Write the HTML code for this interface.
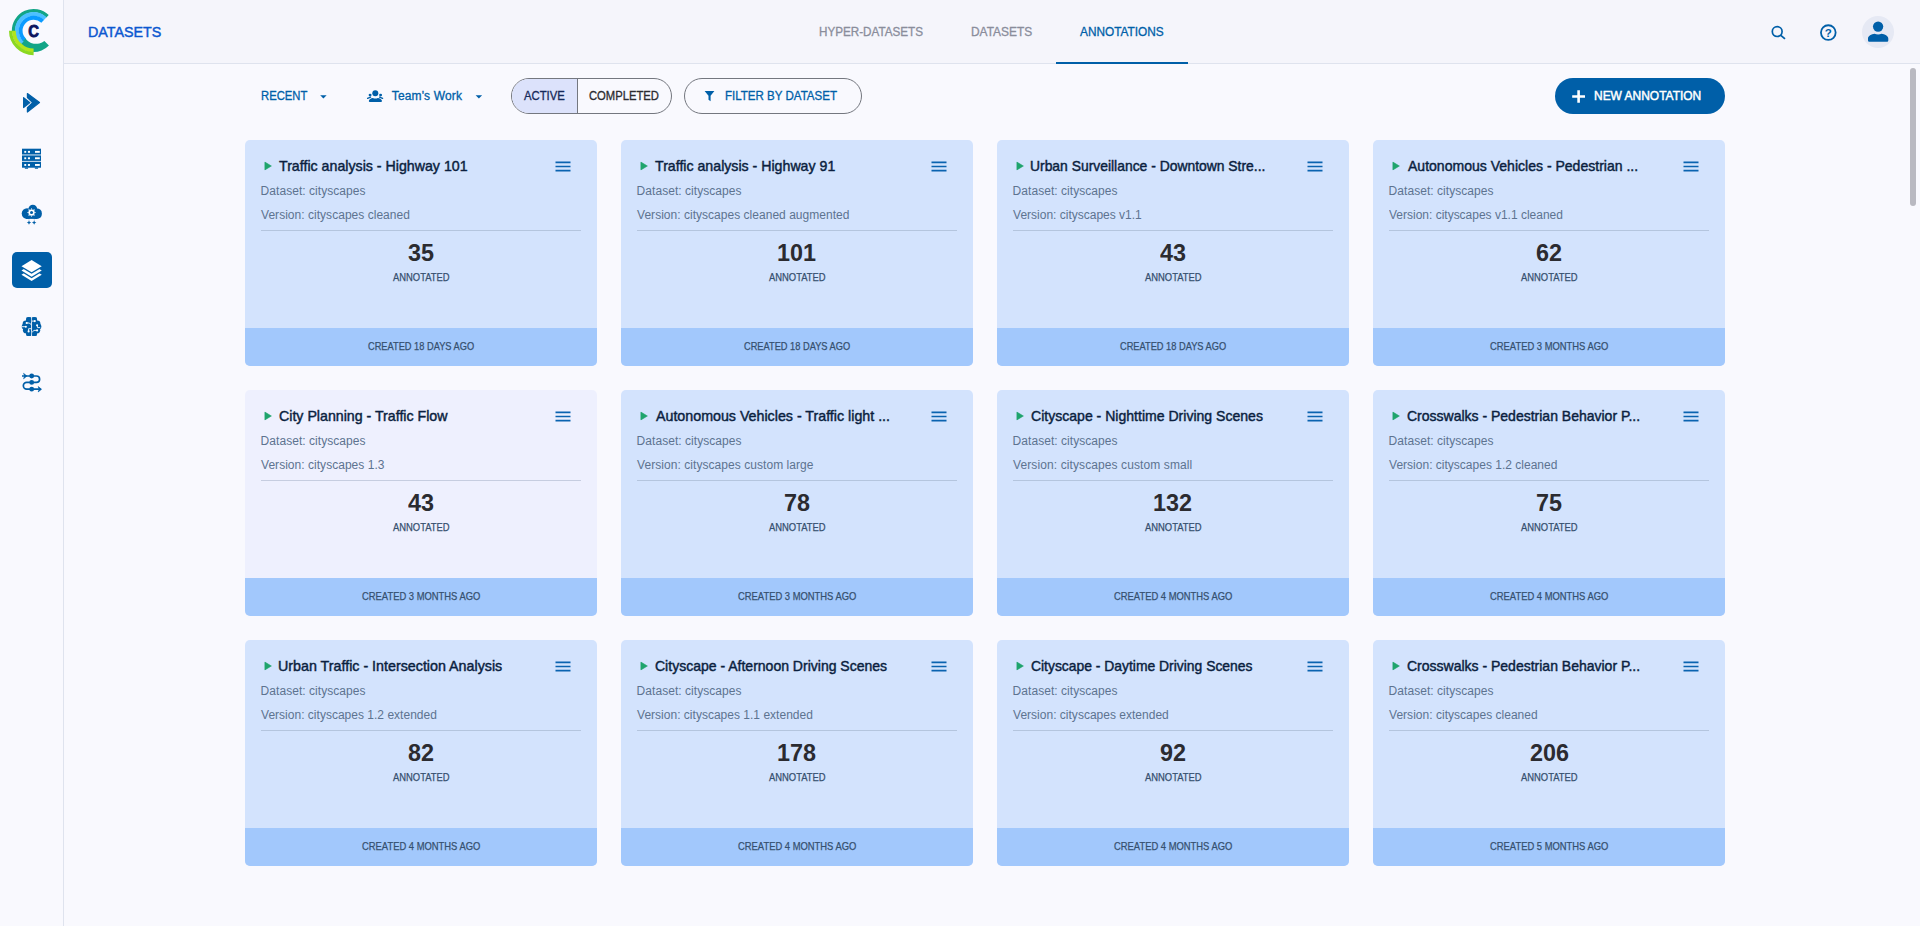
<!DOCTYPE html>
<html lang="en">
<head>
<meta charset="utf-8">
<title>ClearML - Annotations</title>
<style>
html,body{margin:0;padding:0}
body{width:1920px;height:926px;overflow:hidden;position:relative;background:#f9f9fe;font-family:"Liberation Sans",sans-serif}
.abs{position:absolute}
.t{position:absolute;white-space:nowrap;line-height:1;font-weight:400;transform-origin:0 0}
.t.b{font-weight:700}
#side{position:absolute;left:0;top:0;width:63px;height:926px;background:#f9f9fe;border-right:1px solid #dfe3ee}
#hdr{position:absolute;left:64px;top:0;width:1856px;height:63px;background:#f5f5fb;border-bottom:1px solid #dfe3ee}
#tabline{position:absolute;left:1056px;top:62px;width:132px;height:2px;background:#005fa8}
#navact{position:absolute;left:12px;top:252px;width:40px;height:36px;border-radius:5px;background:#005fa8}
#avatar{position:absolute;left:1862px;top:16px;width:32px;height:32px;border-radius:50%;background:#e6e9f4}
#thumb{position:absolute;left:1910px;top:68px;width:6px;height:138px;border-radius:3px;background:#b9b9c1}
.pill{position:absolute;top:78px;height:34px;border:1px solid #74777f;border-radius:18px}
#tgl{left:511px;width:159px;overflow:hidden}
#tgl i{position:absolute;left:0;top:0;width:65px;height:34px;background:#dce2fb;border-right:1px solid #74777f}
#flt{left:684px;width:176px}
#new{position:absolute;left:1555px;top:78px;width:170px;height:36px;border-radius:18px;background:#005fa8}
.card{position:absolute;width:352px;height:226px;border-radius:5px;background:#d3e3fd;overflow:hidden}
.card.hov{background:#eef0fe}
.card .ft{position:absolute;left:0;top:188px;width:352px;height:38px;background:#a2c8fc}
.card .dv{position:absolute;left:16px;top:90px;width:320px;height:1px;background:#b4c5de}
.card.hov .dv{background:#c6cde0}
</style>
</head>
<body>
<div id="side"></div>
<div id="hdr"></div>
<div id="tabline"></div>
<div id="navact"></div>
<div id="avatar"></div>
<div id="thumb"></div>
<div class="pill" id="tgl"><i></i></div>
<div class="pill" id="flt"></div>
<div id="new"></div>
<div class="card" style="left:245px;top:140px"><div class="dv"></div><div class="ft"></div></div>
<div class="card" style="left:621px;top:140px"><div class="dv"></div><div class="ft"></div></div>
<div class="card" style="left:997px;top:140px"><div class="dv"></div><div class="ft"></div></div>
<div class="card" style="left:1373px;top:140px"><div class="dv"></div><div class="ft"></div></div>
<div class="card hov" style="left:245px;top:390px"><div class="dv"></div><div class="ft"></div></div>
<div class="card" style="left:621px;top:390px"><div class="dv"></div><div class="ft"></div></div>
<div class="card" style="left:997px;top:390px"><div class="dv"></div><div class="ft"></div></div>
<div class="card" style="left:1373px;top:390px"><div class="dv"></div><div class="ft"></div></div>
<div class="card" style="left:245px;top:640px"><div class="dv"></div><div class="ft"></div></div>
<div class="card" style="left:621px;top:640px"><div class="dv"></div><div class="ft"></div></div>
<div class="card" style="left:997px;top:640px"><div class="dv"></div><div class="ft"></div></div>
<div class="card" style="left:1373px;top:640px"><div class="dv"></div><div class="ft"></div></div>
<svg class="abs" style="left:0;top:0" width="64" height="64" viewBox="0 0 64 64"><path d="M48.92 45.5A21.3 21.3 0 0 1 17.28 44.39L24.71 37.28A13.15 13.15 0 0 0 44.4 40.9Z" fill="#12a587"/><path d="M13.51 31.40A20.1 20.1 0 0 1 47.56 16.24" fill="none" stroke="#12a587" stroke-width="3.4"/><path d="M22.28 42.84A16.6 16.6 0 1 1 45.13 18.76" fill="none" stroke="#4cc0ff" stroke-width="3.9"/><path d="M24.25 39.73A13.0 13.0 0 0 1 42.63 21.35" fill="none" stroke="#0a9bff" stroke-width="3.8"/><path d="M33.60 50.45A19.75 19.75 0 0 1 13.85 30.70" fill="none" stroke="#b2e51c" stroke-width="3.7"/><path d="M33.60 53.70A23.0 23.0 0 0 1 10.60 30.70" fill="none" stroke="#8bd821" stroke-width="3.2"/><text x="33.7" y="37.35" transform="translate(33.7 0) scale(0.89 1) translate(-33.7 0)" text-anchor="middle" font-family="Liberation Sans, sans-serif" font-weight="bold" font-size="16.6" fill="#0c1660" stroke="#0c1660" stroke-width="0.9" stroke-linejoin="round">C</text></svg>
<svg class="abs" style="left:261px;top:156px" width="16" height="20" viewBox="0 0 16 20"><path d="M3.9 6.1L10.4 10L3.9 13.9Z" fill="#1fa46c" stroke="#1fa46c" stroke-width="0.6" stroke-linejoin="round"/></svg>
<svg class="abs" style="left:553px;top:156px" width="20" height="20" viewBox="0 0 20 20"><path d="M2.5 6.35H17.5M2.5 10.5H17.5M2.5 14.65H17.5" fill="none" stroke="#0a63b0" stroke-width="1.7"/></svg>
<svg class="abs" style="left:637px;top:156px" width="16" height="20" viewBox="0 0 16 20"><path d="M3.9 6.1L10.4 10L3.9 13.9Z" fill="#1fa46c" stroke="#1fa46c" stroke-width="0.6" stroke-linejoin="round"/></svg>
<svg class="abs" style="left:929px;top:156px" width="20" height="20" viewBox="0 0 20 20"><path d="M2.5 6.35H17.5M2.5 10.5H17.5M2.5 14.65H17.5" fill="none" stroke="#0a63b0" stroke-width="1.7"/></svg>
<svg class="abs" style="left:1013px;top:156px" width="16" height="20" viewBox="0 0 16 20"><path d="M3.9 6.1L10.4 10L3.9 13.9Z" fill="#1fa46c" stroke="#1fa46c" stroke-width="0.6" stroke-linejoin="round"/></svg>
<svg class="abs" style="left:1305px;top:156px" width="20" height="20" viewBox="0 0 20 20"><path d="M2.5 6.35H17.5M2.5 10.5H17.5M2.5 14.65H17.5" fill="none" stroke="#0a63b0" stroke-width="1.7"/></svg>
<svg class="abs" style="left:1389px;top:156px" width="16" height="20" viewBox="0 0 16 20"><path d="M3.9 6.1L10.4 10L3.9 13.9Z" fill="#1fa46c" stroke="#1fa46c" stroke-width="0.6" stroke-linejoin="round"/></svg>
<svg class="abs" style="left:1681px;top:156px" width="20" height="20" viewBox="0 0 20 20"><path d="M2.5 6.35H17.5M2.5 10.5H17.5M2.5 14.65H17.5" fill="none" stroke="#0a63b0" stroke-width="1.7"/></svg>
<svg class="abs" style="left:261px;top:406px" width="16" height="20" viewBox="0 0 16 20"><path d="M3.9 6.1L10.4 10L3.9 13.9Z" fill="#1fa46c" stroke="#1fa46c" stroke-width="0.6" stroke-linejoin="round"/></svg>
<svg class="abs" style="left:553px;top:406px" width="20" height="20" viewBox="0 0 20 20"><path d="M2.5 6.35H17.5M2.5 10.5H17.5M2.5 14.65H17.5" fill="none" stroke="#0a63b0" stroke-width="1.7"/></svg>
<svg class="abs" style="left:637px;top:406px" width="16" height="20" viewBox="0 0 16 20"><path d="M3.9 6.1L10.4 10L3.9 13.9Z" fill="#1fa46c" stroke="#1fa46c" stroke-width="0.6" stroke-linejoin="round"/></svg>
<svg class="abs" style="left:929px;top:406px" width="20" height="20" viewBox="0 0 20 20"><path d="M2.5 6.35H17.5M2.5 10.5H17.5M2.5 14.65H17.5" fill="none" stroke="#0a63b0" stroke-width="1.7"/></svg>
<svg class="abs" style="left:1013px;top:406px" width="16" height="20" viewBox="0 0 16 20"><path d="M3.9 6.1L10.4 10L3.9 13.9Z" fill="#1fa46c" stroke="#1fa46c" stroke-width="0.6" stroke-linejoin="round"/></svg>
<svg class="abs" style="left:1305px;top:406px" width="20" height="20" viewBox="0 0 20 20"><path d="M2.5 6.35H17.5M2.5 10.5H17.5M2.5 14.65H17.5" fill="none" stroke="#0a63b0" stroke-width="1.7"/></svg>
<svg class="abs" style="left:1389px;top:406px" width="16" height="20" viewBox="0 0 16 20"><path d="M3.9 6.1L10.4 10L3.9 13.9Z" fill="#1fa46c" stroke="#1fa46c" stroke-width="0.6" stroke-linejoin="round"/></svg>
<svg class="abs" style="left:1681px;top:406px" width="20" height="20" viewBox="0 0 20 20"><path d="M2.5 6.35H17.5M2.5 10.5H17.5M2.5 14.65H17.5" fill="none" stroke="#0a63b0" stroke-width="1.7"/></svg>
<svg class="abs" style="left:261px;top:656px" width="16" height="20" viewBox="0 0 16 20"><path d="M3.9 6.1L10.4 10L3.9 13.9Z" fill="#1fa46c" stroke="#1fa46c" stroke-width="0.6" stroke-linejoin="round"/></svg>
<svg class="abs" style="left:553px;top:656px" width="20" height="20" viewBox="0 0 20 20"><path d="M2.5 6.35H17.5M2.5 10.5H17.5M2.5 14.65H17.5" fill="none" stroke="#0a63b0" stroke-width="1.7"/></svg>
<svg class="abs" style="left:637px;top:656px" width="16" height="20" viewBox="0 0 16 20"><path d="M3.9 6.1L10.4 10L3.9 13.9Z" fill="#1fa46c" stroke="#1fa46c" stroke-width="0.6" stroke-linejoin="round"/></svg>
<svg class="abs" style="left:929px;top:656px" width="20" height="20" viewBox="0 0 20 20"><path d="M2.5 6.35H17.5M2.5 10.5H17.5M2.5 14.65H17.5" fill="none" stroke="#0a63b0" stroke-width="1.7"/></svg>
<svg class="abs" style="left:1013px;top:656px" width="16" height="20" viewBox="0 0 16 20"><path d="M3.9 6.1L10.4 10L3.9 13.9Z" fill="#1fa46c" stroke="#1fa46c" stroke-width="0.6" stroke-linejoin="round"/></svg>
<svg class="abs" style="left:1305px;top:656px" width="20" height="20" viewBox="0 0 20 20"><path d="M2.5 6.35H17.5M2.5 10.5H17.5M2.5 14.65H17.5" fill="none" stroke="#0a63b0" stroke-width="1.7"/></svg>
<svg class="abs" style="left:1389px;top:656px" width="16" height="20" viewBox="0 0 16 20"><path d="M3.9 6.1L10.4 10L3.9 13.9Z" fill="#1fa46c" stroke="#1fa46c" stroke-width="0.6" stroke-linejoin="round"/></svg>
<svg class="abs" style="left:1681px;top:656px" width="20" height="20" viewBox="0 0 20 20"><path d="M2.5 6.35H17.5M2.5 10.5H17.5M2.5 14.65H17.5" fill="none" stroke="#0a63b0" stroke-width="1.7"/></svg>
<!-- sidebar: projects chevrons -->
<svg class="abs" style="left:16px;top:87px" width="32" height="32" viewBox="16 87 32 32"><g fill="#005fa8" stroke="#005fa8" stroke-width="1.2" stroke-linejoin="round"><path d="M27.4 93.6L39.5 102.6L27.4 112L27.4 107.7L32.6 102.6L27.4 97.5Z"/><path d="M23.6 97.6L29.9 102.6L23.6 107.5Z"/></g></svg>
<!-- sidebar: server -->
<svg class="abs" style="left:16px;top:142px" width="32" height="32" viewBox="16 142 32 32"><g fill="#005fa8"><rect x="22" y="148.7" width="19" height="5.4"/><rect x="22" y="155.6" width="19" height="5.3"/><rect x="22" y="162" width="19" height="5.7"/><rect x="24.8" y="167.5" width="3.3" height="1.3" rx="0.5"/><rect x="34.8" y="167.5" width="3.3" height="1.3" rx="0.5"/><rect x="22" y="154.1" width="19" height="1.5" opacity="0.5"/><rect x="22" y="160.9" width="19" height="1.1" opacity="0.25"/></g><g fill="#fff"><rect x="24.3" y="150.9" width="1.9" height="1.9"/><rect x="27.9" y="150.9" width="2.1" height="1.9"/><rect x="35" y="150.9" width="4.8" height="1.9"/><rect x="24.3" y="157.3" width="1.9" height="1.9"/><rect x="27.9" y="157.3" width="2.1" height="1.9"/><rect x="35" y="157.3" width="4.8" height="1.9"/><rect x="24.3" y="164" width="1.9" height="1.9"/><rect x="27.9" y="164" width="2.1" height="1.9"/><rect x="35" y="164" width="4.8" height="1.9"/></g></svg>
<!-- sidebar: cloud gear -->
<svg class="abs" style="left:16px;top:198px" width="32" height="32" viewBox="16 198 32 32"><g fill="#005fa8"><circle cx="32.8" cy="209.1" r="4.4"/><circle cx="27" cy="213.6" r="5.3"/><rect x="31" y="208.4" width="10.9" height="10.5" rx="5"/><rect x="26" y="211" width="11" height="7.9"/><path d="M29.00 220.35L29.71 221.89L31.25 222.60L29.71 223.31L29.00 224.85L28.29 223.31L26.75 222.60L28.29 221.89Z"/><path d="M34.15 220.35L34.86 221.89L36.40 222.60L34.86 223.31L34.15 224.85L33.44 223.31L31.90 222.60L33.44 221.89Z"/><rect x="28.7" y="218.5" width="0.6" height="2" opacity="0.35"/><rect x="33.85" y="218.5" width="0.6" height="2" opacity="0.35"/></g><g fill="#fff"><circle cx="31.55" cy="212.5" r="3.1"/><path d="M31.55 207.9L32.4 209.6L30.7 209.6Z"/><path d="M31.55 217.1L32.4 215.4L30.7 215.4Z"/><path d="M26.95 212.5L28.65 211.65L28.65 213.35Z"/><path d="M36.15 212.5L34.45 211.65L34.45 213.35Z"/><path d="M28.3 209.25L30.1 209.85L28.9 211.05Z"/><path d="M34.8 209.25L33 209.85L34.2 211.05Z"/><path d="M28.3 215.75L30.1 215.15L28.9 213.95Z"/><path d="M34.8 215.75L33 215.15L34.2 213.95Z"/></g><circle cx="31.55" cy="212.5" r="1.55" fill="#005fa8"/></svg>
<!-- sidebar: layers (active) -->
<svg class="abs" style="left:12px;top:252px" width="40" height="36" viewBox="12 252 40 36"><path d="M21.47 274.65L31.60 268.20L41.73 274.65L31.60 281.10Z" fill="#fff"/><path d="M21.47 271.95L31.60 265.58L41.73 271.95L31.60 278.32Z" fill="#005fa8"/><path d="M21.47 270.50L31.60 264.13L41.73 270.50L31.60 276.87Z" fill="#fff"/><path d="M21.47 267.80L31.60 261.75L41.73 267.80L31.60 273.85Z" fill="#005fa8"/><path d="M21.47 266.15L31.60 260.10L41.73 266.15L31.60 272.20Z" fill="#fff"/></svg>
<!-- sidebar: brain -->
<svg class="abs" style="left:16px;top:310px" width="32" height="32" viewBox="16 310 32 32"><g fill="#005fa8"><g id="bh"><circle cx="28.9" cy="319.9" r="2.95"/><circle cx="25.9" cy="323.6" r="3.2"/><circle cx="24.9" cy="326.6" r="3.15"/><circle cx="26" cy="330.2" r="3.1"/><circle cx="28.8" cy="333.1" r="2.95"/><rect x="26.5" y="317.4" width="4.75" height="18.5"/></g><g transform="translate(63.1 0) scale(-1 1)"><circle cx="28.9" cy="319.9" r="2.95"/><circle cx="25.9" cy="323.6" r="3.2"/><circle cx="24.9" cy="326.6" r="3.15"/><circle cx="26" cy="330.2" r="3.1"/><circle cx="28.8" cy="333.1" r="2.95"/><rect x="26.5" y="317.4" width="4.75" height="18.5"/></g></g><path d="M31.55 316.8V336.3" stroke="#f0f4fa" stroke-width="0.75" fill="none"/><g fill="none" stroke="#fff" stroke-width="0.9"><path d="M26.7 323H29.1L31.2 324.5"/><path d="M21.7 326.7H26"/><path d="M28.6 331.4V328.7H31.2"/><path d="M34.8 321.1H31.9"/><path d="M37.1 325.2L37.6 327.6H40.2"/><path d="M37.1 330.4H34L32.2 332.1"/></g><g fill="#fff"><circle cx="26.7" cy="323" r="1.05"/><circle cx="25.9" cy="326.8" r="1.0"/><circle cx="28.6" cy="331.4" r="1.05"/><circle cx="34.8" cy="321.1" r="1.05"/><circle cx="37.1" cy="325.2" r="1.05"/><circle cx="37.1" cy="330.4" r="1.05"/></g></svg>
<!-- sidebar: pipelines -->
<svg class="abs" style="left:16px;top:366px" width="32" height="32" viewBox="16 366 32 32"><path d="M22 376H36.4A3.2 3.2 0 0 1 36.4 382.4H26.7A3.35 3.35 0 0 0 26.7 389.1H40.5" fill="none" stroke="#005fa8" stroke-width="1.7"/><g fill="#005fa8"><circle cx="31.7" cy="376" r="2.4"/><circle cx="31.7" cy="382.4" r="2.4"/><circle cx="31.7" cy="389.2" r="2.4"/><g stroke="#005fa8" stroke-width="0.7" stroke-linejoin="round"><path d="M41.5 389.2L38.2 386.6L39.3 389.2L38.2 391.9Z"/><path d="M26.9 376L23.6 373.4L24.7 376L23.6 378.7Z"/></g></g></svg>
<!-- header: search -->
<svg class="abs" style="left:1760px;top:14px" width="40" height="36" viewBox="1760 14 40 36"><g fill="none" stroke="#005fa8" stroke-width="1.7"><circle cx="1777.2" cy="31.6" r="4.9"/><path d="M1780.8 35.3L1785 38.9" stroke-linecap="butt"/></g></svg>
<!-- header: help -->
<svg class="abs" style="left:1810px;top:14px" width="40" height="36" viewBox="1810 14 40 36"><circle cx="1828.3" cy="32.6" r="7.35" fill="none" stroke="#005fa8" stroke-width="1.8"/><text x="1828.3" y="36.7" text-anchor="middle" font-family="Liberation Sans, sans-serif" font-weight="bold" font-size="11.5" fill="#005fa8">?</text></svg>
<!-- header: user -->
<svg class="abs" style="left:1862px;top:16px" width="32" height="32" viewBox="1862 16 32 32"><g fill="#005fa8"><circle cx="1878.1" cy="26.6" r="5.15"/><path d="M1868 40.6V38.6C1868 36 1871.5 33.9 1874.6 33.8C1876.4 34.6 1879.8 34.6 1881.6 33.8C1884.7 33.9 1888.3 36 1888.3 38.6V40.6A1.2 1.2 0 0 1 1887.1 41.8H1869.2A1.2 1.2 0 0 1 1868 40.6Z"/></g></svg>
<!-- toolbar: dropdown arrows -->
<svg class="abs" style="left:318px;top:92px" width="12" height="10" viewBox="318 92 12 10"><path d="M320.2 95.3H326.6L323.4 98.6Z" fill="#005fa8"/></svg>
<svg class="abs" style="left:473px;top:92px" width="12" height="10" viewBox="473 92 12 10"><path d="M475.6 95.3H482.1L478.85 98.6Z" fill="#005fa8"/></svg>
<!-- toolbar: team icon -->
<svg class="abs" style="left:360px;top:84px" width="32" height="24" viewBox="360 84 32 24"><g fill="#005fa8"><circle cx="375.3" cy="93.2" r="3"/><circle cx="370.1" cy="95.1" r="1.45"/><circle cx="380.6" cy="95.1" r="1.45"/><path d="M369.9 102.1A1.1 1.1 0 0 1 368.8 101C368.8 99.5 371 98.2 372.9 98C374.3 98.7 376.4 98.7 377.8 98C379.7 98.2 382 99.5 382 101A1.1 1.1 0 0 1 380.9 102.1Z"/></g><g fill="none" stroke="#005fa8" stroke-width="1.3" stroke-linecap="round"><path d="M367.6 98.4L370.6 97.1"/><path d="M379.6 97.1L382.6 98.4"/></g></svg>
<!-- toolbar: filter funnel -->
<svg class="abs" style="left:700px;top:88px" width="20" height="16" viewBox="700 88 20 16"><path d="M704.6 91.1H714.4L710.6 95.8V101.3L708.5 99.8V95.8Z" fill="#005fa8"/></svg>
<!-- toolbar: plus -->
<svg class="abs" style="left:1568px;top:88px" width="20" height="18" viewBox="1568 88 20 18"><path d="M1572.2 96.5H1585M1578.6 90.3V102.7" fill="none" stroke="#fff" stroke-width="2.6"/></svg>

<span class="t" style="left:87.95px;top:24px;font-size:15.5px;transform:scaleX(0.9228);color:#0b57d0;-webkit-text-stroke:0.45px #0b57d0">DATASETS</span>
<span class="t" style="left:819.44px;top:26px;font-size:12px;transform:scaleX(0.9732);color:#8a8d9b;-webkit-text-stroke:0.3px #8a8d9b">HYPER-DATASETS</span>
<span class="t" style="left:970.77px;top:26px;font-size:12px;transform:scaleX(0.9945);color:#8a8d9b;-webkit-text-stroke:0.3px #8a8d9b">DATASETS</span>
<span class="t" style="left:1080.38px;top:26px;font-size:12px;transform:scaleX(0.9868);color:#005fa8;-webkit-text-stroke:0.3px #005fa8">ANNOTATIONS</span>
<span class="t" style="left:260.73px;top:90px;font-size:12px;transform:scaleX(0.9381);color:#005fa8;-webkit-text-stroke:0.3px #005fa8">RECENT</span>
<span class="t" style="left:391.78px;top:90px;font-size:12px;letter-spacing:0.140px;color:#005fa8;-webkit-text-stroke:0.3px #005fa8">Team's Work</span>
<span class="t" style="left:524.13px;top:90px;font-size:12px;transform:scaleX(0.9415);color:#16295a;-webkit-text-stroke:0.3px #16295a">ACTIVE</span>
<span class="t" style="left:589.18px;top:90px;font-size:12px;transform:scaleX(0.9368);color:#2b2b30;-webkit-text-stroke:0.3px #2b2b30">COMPLETED</span>
<span class="t" style="left:724.80px;top:90px;font-size:12px;transform:scaleX(0.9617);color:#005fa8;-webkit-text-stroke:0.3px #005fa8">FILTER BY DATASET</span>
<span class="t" style="left:1593.84px;top:90px;font-size:12px;transform:scaleX(0.9971);color:#ffffff;-webkit-text-stroke:0.45px #ffffff">NEW ANNOTATION</span>
<span class="t" style="left:279.21px;top:158px;font-size:15.0px;transform:scaleX(0.9464);color:#0b1f3f;-webkit-text-stroke:0.45px #0b1f3f">Traffic analysis - Highway 101</span>
<span class="t" style="left:260.62px;top:185px;font-size:12.0px;letter-spacing:0.043px;color:#5d7390">Dataset: cityscapes</span>
<span class="t" style="left:261.05px;top:209px;font-size:12.0px;letter-spacing:0.029px;color:#5d7390">Version: cityscapes cleaned</span>
<span class="t b" style="left:408.26px;top:241px;font-size:24.0px;transform:scaleX(0.9734);color:#2b2b30">35</span>
<span class="t" style="left:392.81px;top:272px;font-size:10.9px;transform:scaleX(0.8638);color:#36506f;-webkit-text-stroke:0.25px #36506f">ANNOTATED</span>
<span class="t" style="left:367.65px;top:341px;font-size:10.9px;transform:scaleX(0.8501);color:#36506f;-webkit-text-stroke:0.25px #36506f">CREATED 18 DAYS AGO</span>
<span class="t" style="left:655.21px;top:158px;font-size:15.0px;transform:scaleX(0.9442);color:#0b1f3f;-webkit-text-stroke:0.45px #0b1f3f">Traffic analysis - Highway 91</span>
<span class="t" style="left:636.62px;top:185px;font-size:12.0px;letter-spacing:0.043px;color:#5d7390">Dataset: cityscapes</span>
<span class="t" style="left:637.05px;top:209px;font-size:12.0px;letter-spacing:0.024px;color:#5d7390">Version: cityscapes cleaned augmented</span>
<span class="t b" style="left:777.30px;top:241px;font-size:24.0px;transform:scaleX(0.9734);color:#2b2b30">101</span>
<span class="t" style="left:768.81px;top:272px;font-size:10.9px;transform:scaleX(0.8638);color:#36506f;-webkit-text-stroke:0.25px #36506f">ANNOTATED</span>
<span class="t" style="left:743.65px;top:341px;font-size:10.9px;transform:scaleX(0.8501);color:#36506f;-webkit-text-stroke:0.25px #36506f">CREATED 18 DAYS AGO</span>
<span class="t" style="left:1030.45px;top:158px;font-size:15.0px;transform:scaleX(0.9257);color:#0b1f3f;-webkit-text-stroke:0.45px #0b1f3f">Urban Surveillance - Downtown Stre...</span>
<span class="t" style="left:1012.62px;top:185px;font-size:12.0px;letter-spacing:0.043px;color:#5d7390">Dataset: cityscapes</span>
<span class="t" style="left:1013.05px;top:209px;font-size:12.0px;letter-spacing:0.000px;color:#5d7390">Version: cityscapes v1.1</span>
<span class="t b" style="left:1160.45px;top:241px;font-size:24.0px;transform:scaleX(0.9734);color:#2b2b30">43</span>
<span class="t" style="left:1144.81px;top:272px;font-size:10.9px;transform:scaleX(0.8638);color:#36506f;-webkit-text-stroke:0.25px #36506f">ANNOTATED</span>
<span class="t" style="left:1119.65px;top:341px;font-size:10.9px;transform:scaleX(0.8501);color:#36506f;-webkit-text-stroke:0.25px #36506f">CREATED 18 DAYS AGO</span>
<span class="t" style="left:1407.50px;top:158px;font-size:15.0px;transform:scaleX(0.9357);color:#0b1f3f;-webkit-text-stroke:0.45px #0b1f3f">Autonomous Vehicles - Pedestrian ...</span>
<span class="t" style="left:1388.62px;top:185px;font-size:12.0px;letter-spacing:0.043px;color:#5d7390">Dataset: cityscapes</span>
<span class="t" style="left:1389.05px;top:209px;font-size:12.0px;transform:scaleX(0.9990);color:#5d7390">Version: cityscapes v1.1 cleaned</span>
<span class="t b" style="left:1536.25px;top:241px;font-size:24.0px;transform:scaleX(0.9734);color:#2b2b30">62</span>
<span class="t" style="left:1520.81px;top:272px;font-size:10.9px;transform:scaleX(0.8638);color:#36506f;-webkit-text-stroke:0.25px #36506f">ANNOTATED</span>
<span class="t" style="left:1489.55px;top:341px;font-size:10.9px;transform:scaleX(0.8629);color:#36506f;-webkit-text-stroke:0.25px #36506f">CREATED 3 MONTHS AGO</span>
<span class="t" style="left:278.80px;top:408px;font-size:15.0px;transform:scaleX(0.9459);color:#0b1f3f;-webkit-text-stroke:0.45px #0b1f3f">City Planning - Traffic Flow</span>
<span class="t" style="left:260.62px;top:435px;font-size:12.0px;letter-spacing:0.043px;color:#5d7390">Dataset: cityscapes</span>
<span class="t" style="left:261.05px;top:459px;font-size:12.0px;letter-spacing:0.030px;color:#5d7390">Version: cityscapes 1.3</span>
<span class="t b" style="left:408.45px;top:491px;font-size:24.0px;transform:scaleX(0.9734);color:#2b2b30">43</span>
<span class="t" style="left:392.81px;top:522px;font-size:10.9px;transform:scaleX(0.8638);color:#36506f;-webkit-text-stroke:0.25px #36506f">ANNOTATED</span>
<span class="t" style="left:361.55px;top:591px;font-size:10.9px;transform:scaleX(0.8629);color:#36506f;-webkit-text-stroke:0.25px #36506f">CREATED 3 MONTHS AGO</span>
<span class="t" style="left:655.50px;top:408px;font-size:15.0px;transform:scaleX(0.9493);color:#0b1f3f;-webkit-text-stroke:0.45px #0b1f3f">Autonomous Vehicles - Traffic light ...</span>
<span class="t" style="left:636.62px;top:435px;font-size:12.0px;letter-spacing:0.043px;color:#5d7390">Dataset: cityscapes</span>
<span class="t" style="left:637.05px;top:459px;font-size:12.0px;letter-spacing:0.056px;color:#5d7390">Version: cityscapes custom large</span>
<span class="t b" style="left:784.06px;top:491px;font-size:24.0px;transform:scaleX(0.9734);color:#2b2b30">78</span>
<span class="t" style="left:768.81px;top:522px;font-size:10.9px;transform:scaleX(0.8638);color:#36506f;-webkit-text-stroke:0.25px #36506f">ANNOTATED</span>
<span class="t" style="left:737.55px;top:591px;font-size:10.9px;transform:scaleX(0.8629);color:#36506f;-webkit-text-stroke:0.25px #36506f">CREATED 3 MONTHS AGO</span>
<span class="t" style="left:1030.81px;top:408px;font-size:15.0px;transform:scaleX(0.9369);color:#0b1f3f;-webkit-text-stroke:0.45px #0b1f3f">Cityscape - Nighttime Driving Scenes</span>
<span class="t" style="left:1012.62px;top:435px;font-size:12.0px;letter-spacing:0.043px;color:#5d7390">Dataset: cityscapes</span>
<span class="t" style="left:1013.05px;top:459px;font-size:12.0px;letter-spacing:0.100px;color:#5d7390">Version: cityscapes custom small</span>
<span class="t b" style="left:1153.44px;top:491px;font-size:24.0px;transform:scaleX(0.9734);color:#2b2b30">132</span>
<span class="t" style="left:1144.81px;top:522px;font-size:10.9px;transform:scaleX(0.8638);color:#36506f;-webkit-text-stroke:0.25px #36506f">ANNOTATED</span>
<span class="t" style="left:1113.55px;top:591px;font-size:10.9px;transform:scaleX(0.8629);color:#36506f;-webkit-text-stroke:0.25px #36506f">CREATED 4 MONTHS AGO</span>
<span class="t" style="left:1406.81px;top:408px;font-size:15.0px;transform:scaleX(0.9332);color:#0b1f3f;-webkit-text-stroke:0.45px #0b1f3f">Crosswalks - Pedestrian Behavior P...</span>
<span class="t" style="left:1388.62px;top:435px;font-size:12.0px;letter-spacing:0.043px;color:#5d7390">Dataset: cityscapes</span>
<span class="t" style="left:1389.05px;top:459px;font-size:12.0px;letter-spacing:0.008px;color:#5d7390">Version: cityscapes 1.2 cleaned</span>
<span class="t b" style="left:1536.03px;top:491px;font-size:24.0px;transform:scaleX(0.9734);color:#2b2b30">75</span>
<span class="t" style="left:1520.81px;top:522px;font-size:10.9px;transform:scaleX(0.8638);color:#36506f;-webkit-text-stroke:0.25px #36506f">ANNOTATED</span>
<span class="t" style="left:1489.55px;top:591px;font-size:10.9px;transform:scaleX(0.8629);color:#36506f;-webkit-text-stroke:0.25px #36506f">CREATED 4 MONTHS AGO</span>
<span class="t" style="left:278.42px;top:658px;font-size:15.0px;transform:scaleX(0.9515);color:#0b1f3f;-webkit-text-stroke:0.45px #0b1f3f">Urban Traffic - Intersection Analysis</span>
<span class="t" style="left:260.62px;top:685px;font-size:12.0px;letter-spacing:0.043px;color:#5d7390">Dataset: cityscapes</span>
<span class="t" style="left:261.05px;top:709px;font-size:12.0px;letter-spacing:0.012px;color:#5d7390">Version: cityscapes 1.2 extended</span>
<span class="t b" style="left:408.30px;top:741px;font-size:24.0px;transform:scaleX(0.9734);color:#2b2b30">82</span>
<span class="t" style="left:392.81px;top:772px;font-size:10.9px;transform:scaleX(0.8638);color:#36506f;-webkit-text-stroke:0.25px #36506f">ANNOTATED</span>
<span class="t" style="left:361.55px;top:841px;font-size:10.9px;transform:scaleX(0.8629);color:#36506f;-webkit-text-stroke:0.25px #36506f">CREATED 4 MONTHS AGO</span>
<span class="t" style="left:654.81px;top:658px;font-size:15.0px;transform:scaleX(0.9342);color:#0b1f3f;-webkit-text-stroke:0.45px #0b1f3f">Cityscape - Afternoon Driving Scenes</span>
<span class="t" style="left:636.62px;top:685px;font-size:12.0px;letter-spacing:0.043px;color:#5d7390">Dataset: cityscapes</span>
<span class="t" style="left:637.05px;top:709px;font-size:12.0px;letter-spacing:0.012px;color:#5d7390">Version: cityscapes 1.1 extended</span>
<span class="t b" style="left:777.33px;top:741px;font-size:24.0px;transform:scaleX(0.9734);color:#2b2b30">178</span>
<span class="t" style="left:768.81px;top:772px;font-size:10.9px;transform:scaleX(0.8638);color:#36506f;-webkit-text-stroke:0.25px #36506f">ANNOTATED</span>
<span class="t" style="left:737.55px;top:841px;font-size:10.9px;transform:scaleX(0.8629);color:#36506f;-webkit-text-stroke:0.25px #36506f">CREATED 4 MONTHS AGO</span>
<span class="t" style="left:1030.82px;top:658px;font-size:15.0px;transform:scaleX(0.9256);color:#0b1f3f;-webkit-text-stroke:0.45px #0b1f3f">Cityscape - Daytime Driving Scenes</span>
<span class="t" style="left:1012.62px;top:685px;font-size:12.0px;letter-spacing:0.043px;color:#5d7390">Dataset: cityscapes</span>
<span class="t" style="left:1013.05px;top:709px;font-size:12.0px;letter-spacing:0.011px;color:#5d7390">Version: cityscapes extended</span>
<span class="t b" style="left:1160.27px;top:741px;font-size:24.0px;transform:scaleX(0.9734);color:#2b2b30">92</span>
<span class="t" style="left:1144.81px;top:772px;font-size:10.9px;transform:scaleX(0.8638);color:#36506f;-webkit-text-stroke:0.25px #36506f">ANNOTATED</span>
<span class="t" style="left:1113.55px;top:841px;font-size:10.9px;transform:scaleX(0.8629);color:#36506f;-webkit-text-stroke:0.25px #36506f">CREATED 4 MONTHS AGO</span>
<span class="t" style="left:1406.81px;top:658px;font-size:15.0px;transform:scaleX(0.9332);color:#0b1f3f;-webkit-text-stroke:0.45px #0b1f3f">Crosswalks - Pedestrian Behavior P...</span>
<span class="t" style="left:1388.62px;top:685px;font-size:12.0px;letter-spacing:0.043px;color:#5d7390">Dataset: cityscapes</span>
<span class="t" style="left:1389.05px;top:709px;font-size:12.0px;letter-spacing:0.021px;color:#5d7390">Version: cityscapes cleaned</span>
<span class="t b" style="left:1529.73px;top:741px;font-size:24.0px;transform:scaleX(0.9734);color:#2b2b30">206</span>
<span class="t" style="left:1520.81px;top:772px;font-size:10.9px;transform:scaleX(0.8638);color:#36506f;-webkit-text-stroke:0.25px #36506f">ANNOTATED</span>
<span class="t" style="left:1489.55px;top:841px;font-size:10.9px;transform:scaleX(0.8629);color:#36506f;-webkit-text-stroke:0.25px #36506f">CREATED 5 MONTHS AGO</span>
</body>
</html>
